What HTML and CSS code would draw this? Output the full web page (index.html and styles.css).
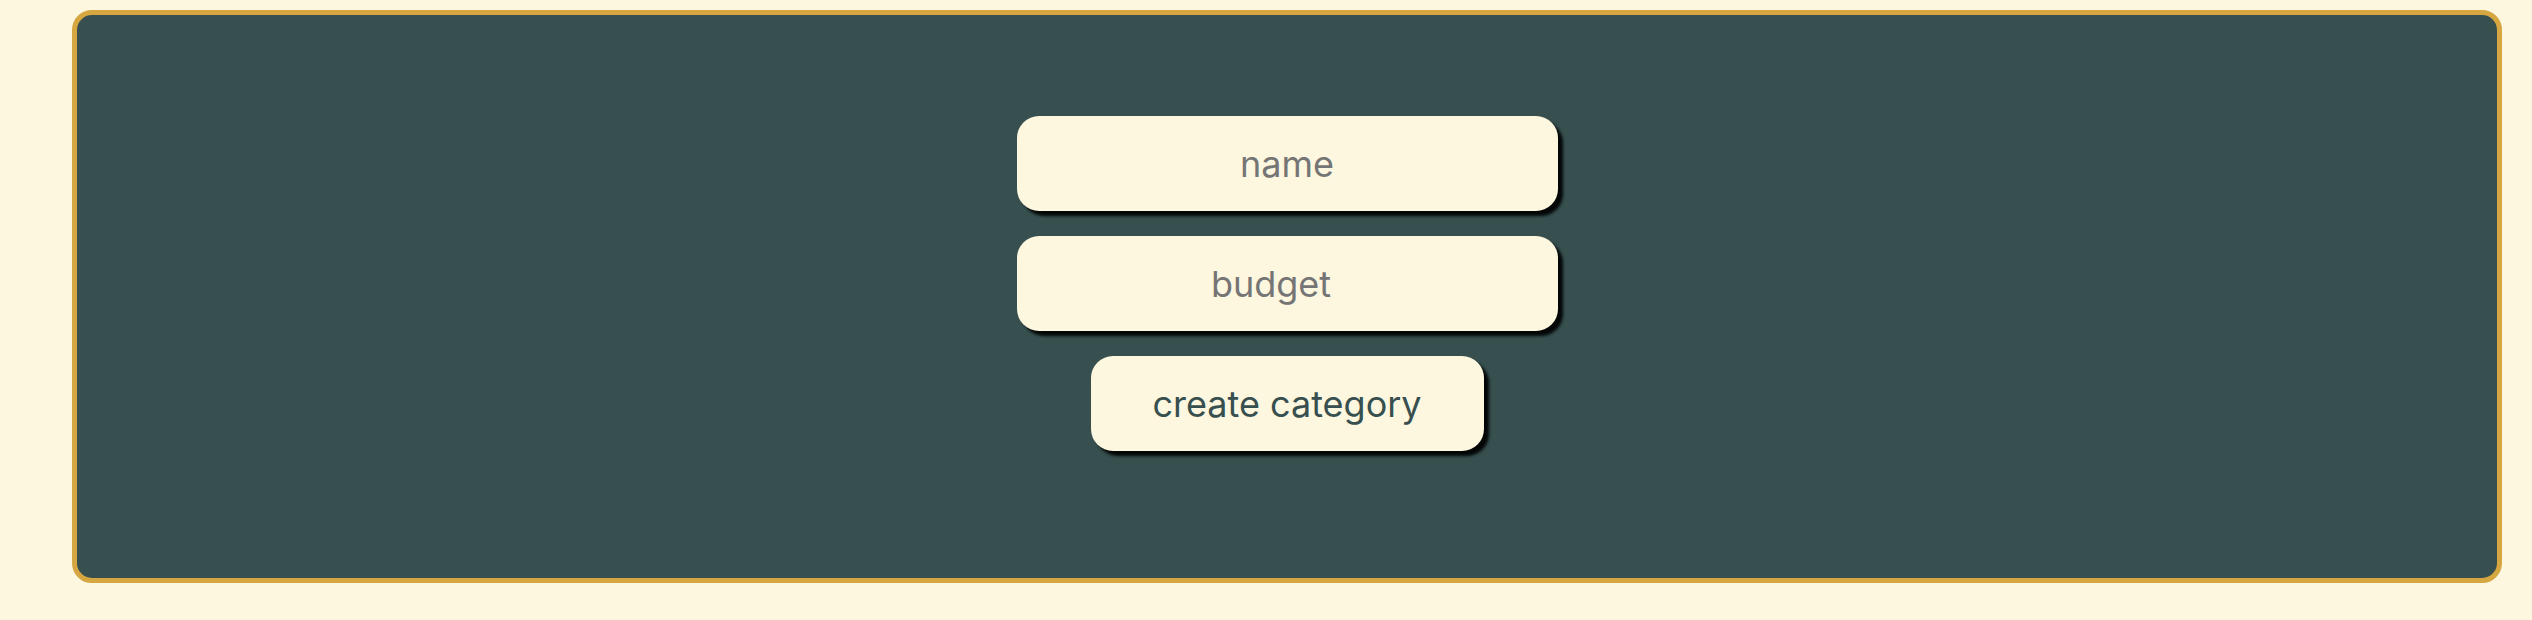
FILE: index.html
```html
<!DOCTYPE html>
<html lang="en">
<head>
<meta charset="utf-8">
<title>Create category</title>
<link rel="stylesheet" href="styles.css">
</head>
<body>
<main class="panel">
  <form class="category-form">
    <input class="field" type="text" placeholder="name">
    <input class="field field-number" type="number" placeholder="budget">
    <button class="create-btn" type="button">create category</button>
  </form>
</main>
</body>
</html>
```
FILE: styles.css
```css
html, body {
  margin: 0;
  background: #fdf7df;
}
body {
  padding: 10px 30px 37px 72px;
  font-family: Inter, "Noto Sans", sans-serif;
}
.panel {
  box-sizing: border-box;
  height: 573px;
  background: #374f4f;
  border: 5px solid #d6a641;
  border-radius: 20px;
}
.category-form {
  display: flex;
  flex-direction: column;
  align-items: center;
  gap: 25px;
  padding-top: 101px;
}
.field {
  box-sizing: border-box;
  width: 541px;
  height: 95px;
  border: none;
  border-radius: 22px;
  background: #fdf7df;
  box-shadow: 5px 5px 3px rgba(0,0,0,0.92);
  font-family: inherit;
  font-size: 36px;
  color: #374f4f;
  text-align: center;
  outline: none;
  padding: 0;
}
.field::placeholder {
  color: #757575;
  opacity: 1;
}
.field-number {
  padding-right: 32px;
  -moz-appearance: textfield;
}
.field-number::-webkit-inner-spin-button,
.field-number::-webkit-outer-spin-button {
  -webkit-appearance: none;
  margin: 0;
}
.create-btn {
  box-sizing: border-box;
  width: 393px;
  height: 95px;
  border: none;
  border-radius: 22px;
  background: #fdf7df;
  box-shadow: 5px 5px 3px rgba(0,0,0,0.92);
  font-family: inherit;
  font-size: 36px;
  color: #374f4f;
  cursor: pointer;
  padding: 0;
}
```
